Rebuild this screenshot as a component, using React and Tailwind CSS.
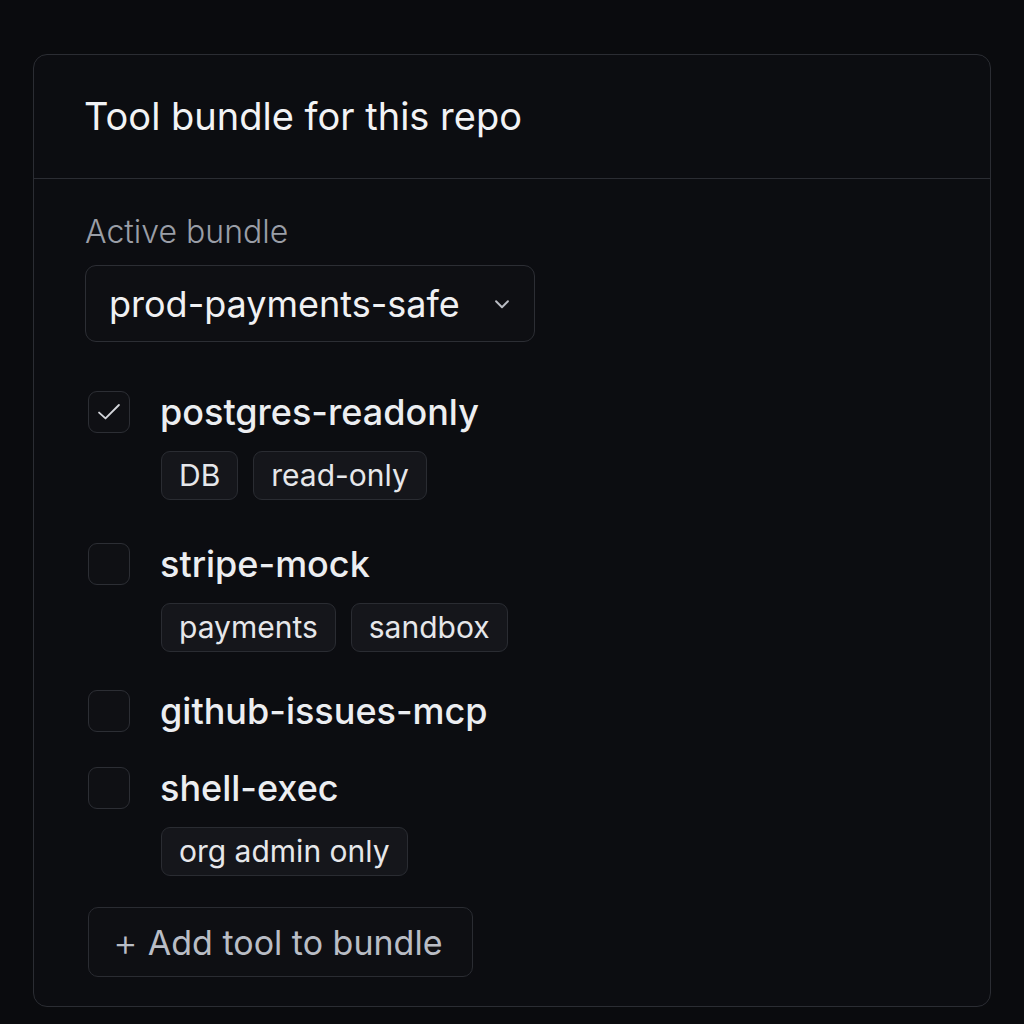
import React from 'react';

const tools = [
  { name: 'postgres-readonly', checked: true, tags: ['DB', 'read-only'] },
  { name: 'stripe-mock', checked: false, tags: ['payments', 'sandbox'] },
  { name: 'github-issues-mcp', checked: false, tags: [] },
  { name: 'shell-exec', checked: false, tags: ['org admin only'] },
];

const Checkbox = ({ checked }) => (
  <div className="w-[42px] h-[42px] shrink-0 rounded-[9px] border border-[#2c2e34] bg-[#0f1014] flex items-center justify-center">
    {checked && (
      <svg width="28" height="28" viewBox="0 0 24 24" fill="none" stroke="#d4d6db" strokeWidth="1.6" strokeLinecap="round" strokeLinejoin="round">
        <path d="M3.5 12.5l5.5 5L20.5 6" />
      </svg>
    )}
  </div>
);

const Tag = ({ label }) => (
  <span className="h-[49px] px-[17px] flex items-center rounded-[9px] border border-[#2a2c32] bg-[#15161b] text-[30px] text-[#e6e7ea]">
    {label}
  </span>
);

const ToolRow = ({ tool }) => (
  <div>
    <div className="flex items-center h-[44px]">
      <div className="ml-[3px]">
        <Checkbox checked={tool.checked} />
      </div>
      <span className="ml-[30px] text-[36px] font-medium text-[#eceef1]">{tool.name}</span>
    </div>
    {tool.tags.length > 0 && (
      <div className="flex gap-[15px] ml-[76px] mt-[17px]">
        {tool.tags.map((t) => (
          <Tag key={t} label={t} />
        ))}
      </div>
    )}
  </div>
);

export default function App() {
  return (
    <div className="min-h-screen bg-[#0a0b0e] pt-[54px] pl-[33px]" style={{ fontFamily: 'Inter, "Noto Sans", sans-serif' }}>
      <div className="w-[958px] h-[953px] rounded-[14px] border border-[#2b2d33] bg-[#0c0d11] overflow-hidden">
        {/* header */}
        <div className="h-[124px] border-b border-[#2b2d33] flex items-center pl-[50px]">
          <h2 className="text-[38px] text-[#f2f3f5] font-normal">Tool bundle for this repo</h2>
        </div>

        {/* body */}
        <div className="pl-[51px] pt-[36px]">
          <div className="text-[32px] font-light text-[#9a9ea7] leading-[34px]">Active bundle</div>

          <button className="mt-[16px] w-[450px] h-[77px] rounded-[11px] border border-[#2c2e34] bg-[#0e0f13] flex items-center pl-[23px] pr-[19px]">
            <span className="text-[36px] text-[#f0f1f3]">prod-payments-safe</span>
            <svg className="ml-auto" width="26" height="26" viewBox="0 0 24 24" fill="none" stroke="#b9bcc3" strokeWidth="1.8" strokeLinecap="round" strokeLinejoin="round">
              <path d="M6.5 9.5l5.5 5.5 5.5-5.5" />
            </svg>
          </button>

          <div className="mt-[48px] flex flex-col">
            <ToolRow tool={tools[0]} />
            <div className="mt-[42px]"><ToolRow tool={tools[1]} /></div>
            <div className="mt-[37px]"><ToolRow tool={tools[2]} /></div>
            <div className="mt-[33px]"><ToolRow tool={tools[3]} /></div>
          </div>

          <button className="mt-[31px] ml-[3px] w-[385px] h-[70px] rounded-[10px] border border-[#2a2c32] bg-[#0e0f13] flex items-center pl-[24px] text-[34px] text-[#b9bdc5]">
            <span className="mr-[10px] text-[38px] leading-none font-light">+</span>
            <span>Add tool to bundle</span>
          </button>
        </div>
      </div>
    </div>
  );
}
